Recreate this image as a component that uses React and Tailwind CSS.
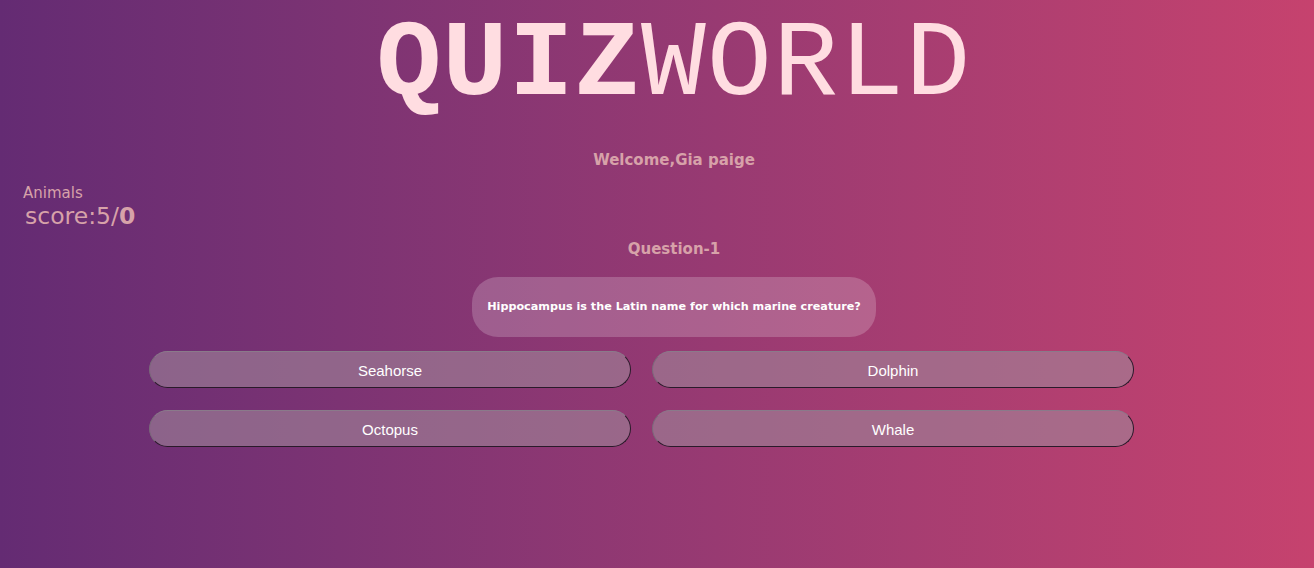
export default function App() {
  const options = ["Seahorse", "Dolphin", "Octopus", "Whale"];

  return (
    <div className="min-h-[568px] w-full bg-gradient-to-r from-[#642b73] to-[#c6426e] font-['DejaVu_Sans',Verdana,sans-serif] overflow-hidden">
      <h1 className="pl-[34px] text-center font-['Liberation_Mono',monospace] text-[108px] leading-[130px] tracking-[1.3px] text-[#ffdde1]">
        <span className="font-bold">QUIZ</span>WORLD
      </h1>

      <p className="mt-[19px] pl-[34px] text-center text-[15px] font-bold text-[#d7a2a9]">Welcome,Gia paige</p>

      <div className="mt-[12px] ml-[23px] text-[#d7a2a9]">
        <p className="text-[15px] leading-[18px]">Animals</p>
        <p className="ml-[2px] text-[23.5px] leading-[28px]">
          score:5/<span className="font-bold">0</span>
        </p>
      </div>

      <p className="mt-[8px] pl-[34px] text-center text-[15px] font-bold text-[#d7a2a9]">Question-1</p>

      <div className="mt-[17px] flex justify-center pl-[34px]">
        <div className="flex h-[60px] w-[404px] items-center justify-center rounded-[26px] bg-white/20 text-[11.2px] font-bold text-white">
          Hippocampus is the Latin name for which marine creature?
        </div>
      </div>

      <div className="mt-[14px] ml-[149px] grid w-[985px] grid-cols-2 gap-x-[21px] gap-y-[22px]">
        {options.map((o) => (
          <button
            key={o}
            className="h-[37px] pt-[3px] rounded-full border border-t-[#8a7a8a] border-l-[#7a6a7a] border-r-[#2a1a2a] border-b-[#2a1a2a] bg-[rgba(160,135,154,0.6)] font-['Liberation_Sans',Arial,sans-serif] text-[15px] text-white"
          >
            {o}
          </button>
        ))}
      </div>
    </div>
  );
}
